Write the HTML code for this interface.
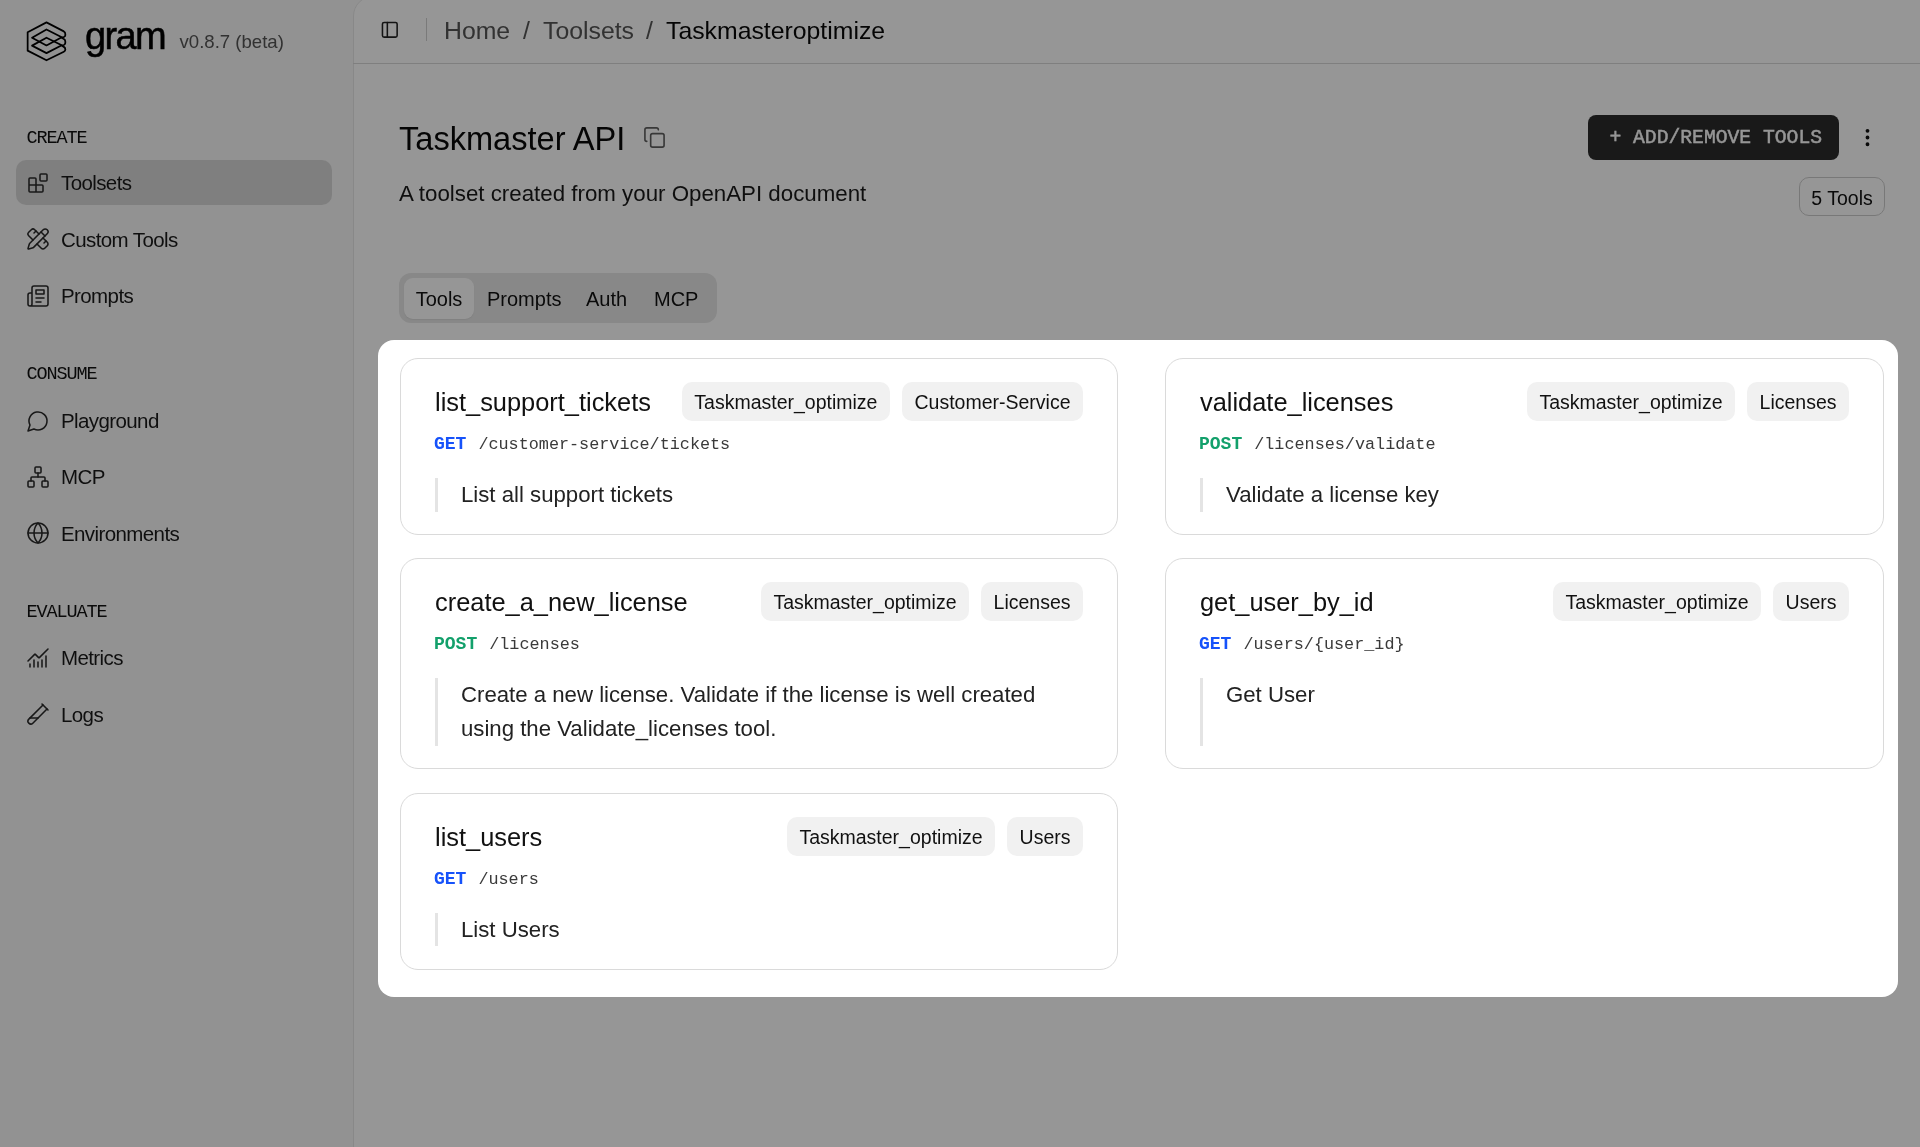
<!DOCTYPE html>
<html><head><meta charset="utf-8">
<style>
*{box-sizing:border-box;margin:0;padding:0}
html,body{width:1920px;height:1147px;overflow:hidden}
body{font-family:"Liberation Sans",sans-serif;background:#f8f8f8;color:#0a0a0a;position:relative}
.abs{position:absolute;white-space:nowrap}
.sb{position:absolute;left:0;top:0;width:353px;height:1147px;background:#f8f8f8}
.logo{position:absolute;left:22px;top:18px;width:50px;height:48px}
.brand{left:85px;top:10.5px;font-size:38px;letter-spacing:-1.6px;color:#000;line-height:50px;-webkit-text-stroke:0.5px #000}
.ver{left:179.5px;top:30px;font-size:18.6px;color:#555;line-height:24px}
.sec{left:26.5px;font-family:"Liberation Mono",monospace;font-size:18.5px;letter-spacing:-1.1px;color:#111;line-height:20px}
.item{position:absolute;left:16px;width:316px;height:45px;border-radius:10px}
.item.act{background:#d9d9d9}
.item svg{position:absolute;left:10.1px;top:10.5px;width:24px;height:24px}
.item span{position:absolute;left:45px;top:0;line-height:45px;font-size:20.5px;letter-spacing:-0.6px;color:#1a1a1a;white-space:nowrap}
.main{position:absolute;left:353px;top:-4px;width:1600px;height:1170px;background:#fff;border:1px solid #e8e8e8;border-radius:20px}
.hdr{position:absolute;left:353px;top:63px;width:1567px;height:1px;background:#d8d8d8}
.crumb{top:16px;font-size:24.8px;line-height:30px;color:#555}
.title{left:399px;top:119.5px;font-size:32.6px;line-height:38px;color:#0a0a0a}
.sub{left:399px;top:180px;font-size:22.3px;line-height:28px;color:#1a1a1a}
.tabs{position:absolute;left:399px;top:273px;width:318px;height:50px;border-radius:12px;background:#e8e8e8}
.tab{position:absolute;top:5px;height:41px;line-height:42px;font-size:20px;color:#111}
.tab.act{background:#fff;border-radius:9px;box-shadow:0 1px 2px rgba(0,0,0,.08)}
.btn{position:absolute;left:1588px;top:115px;width:251px;height:45px;border-radius:8px;background:#2c2c2c}
.btn span{position:absolute;left:21.4px;top:0;white-space:pre;font-family:"Liberation Mono",monospace;font-size:19.7px;color:#fff;line-height:47.5px;-webkit-text-stroke:0.45px #fff}
.count{position:absolute;left:1799px;top:177px;width:86px;height:39px;border:1px solid #cdcdcd;border-radius:10px;text-align:center;line-height:40px;font-size:19.5px;color:#111}
.spot{position:absolute;left:377.6px;top:339.8px;width:1520.4px;height:657.2px;border-radius:16px;background:#fff;box-shadow:0 0 0 4000px rgba(0,0,0,.41)}
.card{position:absolute;border:1px solid #dadada;border-radius:18px;background:#fff}
.card .t{position:absolute;left:34px;top:24px;line-height:39px;font-size:25.4px;color:#111;white-space:nowrap}
.badges{position:absolute;right:34px;top:23px;height:39px;display:flex;gap:12px}
.bd{height:39px;line-height:40.5px;padding:0 12.5px;border-radius:10px;background:#f1f1f1;font-size:19.5px;color:#111;white-space:nowrap}
.card .m{position:absolute;left:33px;top:73px;line-height:24px;font-family:"Liberation Mono",monospace;font-size:16.8px;color:#3a3a3a;white-space:nowrap}
.m b{font-weight:bold;font-size:18px}.m i{font-style:normal;margin-left:12px}
.get{color:#1652fa}.post{color:#13a06b}
.card .q{position:absolute;left:34px;top:119px;right:35px;bottom:22.5px;border-left:3px solid #e4e4e4;padding-left:23px;font-size:22.2px;line-height:33.7px;color:#222}
</style></head>
<body>
<div id="root" style="position:absolute;left:0;top:0;width:1920px;height:1147px;will-change:transform">
<div class="sb">
  <svg class="logo" viewBox="0 0 1195 1147" fill="none" stroke="#000" stroke-width="42" stroke-linejoin="round">
    <path d="M585 105 L1000 320 Q1035 340 1035 380 L1035 410 Q1035 440 1000 455 L950 470 L1000 500 Q1035 520 1035 560 L1035 600 Q1035 630 1000 645 L950 660 L1000 690 Q1035 710 1035 745 L1035 760 Q1035 790 1000 805 L585 1010 L135 780 L135 340 Z"/>
    <path d="M240 470 L585 275 L950 460 L585 655 Z"/>
    <path d="M240 660 L585 470 L950 650 L585 840 Z"/>
  </svg>
  <div class="abs brand">gram</div>
  <div class="abs ver">v0.8.7 (beta)</div>

  <div class="abs sec" style="top:128.5px">CREATE</div>
  <div class="item act" style="top:160px">
    <svg viewBox="0 0 24 24" fill="none" stroke="#2a2a2a" stroke-width="1.55" stroke-linecap="round" stroke-linejoin="round"><rect width="7" height="7" x="14" y="3" rx="1"/><path d="M10 21V8a1 1 0 0 0-1-1H4a1 1 0 0 0-1 1v12a1 1 0 0 0 1 1h12a1 1 0 0 0 1-1v-5a1 1 0 0 0-1-1H3"/></svg>
    <span>Toolsets</span></div>
  <div class="item" style="top:216.5px">
    <svg viewBox="0 0 24 24" fill="none" stroke="#2a2a2a" stroke-width="1.55" stroke-linecap="round" stroke-linejoin="round"><path d="M13 7 8.7 2.7a2.41 2.41 0 0 0-3.4 0L2.7 5.3a2.41 2.41 0 0 0 0 3.4L7 13"/><path d="m8 6 2-2"/><path d="m18 16 2-2"/><path d="m17 11 4.3 4.3c.94.94.94 2.46 0 3.4l-2.6 2.6c-.94.94-2.460.94-3.4 0L11 17"/><path d="M21.174 6.812a1 1 0 0 0-3.986-3.987L3.842 16.174a2 2 0 0 0-.5.83l-1.321 4.352a.5.5 0 0 0 .623.622l4.353-1.32a2 2 0 0 0 .83-.497z"/><path d="m15 5 4 4"/></svg>
    <span>Custom Tools</span></div>
  <div class="item" style="top:273px">
    <svg viewBox="0 0 24 24" fill="none" stroke="#2a2a2a" stroke-width="1.55" stroke-linecap="round" stroke-linejoin="round"><path d="M4 22h16a2 2 0 0 0 2-2V4a2 2 0 0 0-2-2H8a2 2 0 0 0-2 2v16a2 2 0 0 1-2 2Zm0 0a2 2 0 0 1-2-2v-9c0-1.1.9-2 2-2h2"/><path d="M18 14h-8"/><path d="M15 18h-5"/><path d="M10 6h8v4h-8V6Z"/></svg>
    <span>Prompts</span></div>

  <div class="abs sec" style="top:365px">CONSUME</div>
  <div class="item" style="top:398px">
    <svg viewBox="0 0 24 24" fill="none" stroke="#2a2a2a" stroke-width="1.55" stroke-linecap="round" stroke-linejoin="round"><path d="M7.9 20A9 9 0 1 0 4 16.1L2 22Z"/></svg>
    <span>Playground</span></div>
  <div class="item" style="top:454px">
    <svg viewBox="0 0 24 24" fill="none" stroke="#2a2a2a" stroke-width="1.55" stroke-linecap="round" stroke-linejoin="round"><rect x="16" y="16" width="6" height="6" rx="1"/><rect x="2" y="16" width="6" height="6" rx="1"/><rect x="9" y="2" width="6" height="6" rx="1"/><path d="M5 16v-3a1 1 0 0 1 1-1h12a1 1 0 0 1 1 1v3"/><path d="M12 12V8"/></svg>
    <span>MCP</span></div>
  <div class="item" style="top:510.5px">
    <svg viewBox="0 0 24 24" fill="none" stroke="#2a2a2a" stroke-width="1.55" stroke-linecap="round" stroke-linejoin="round"><circle cx="12" cy="12" r="10"/><path d="M12 2a14.5 14.5 0 0 0 0 20 14.5 14.5 0 0 0 0-20"/><path d="M2 12h20"/></svg>
    <span>Environments</span></div>

  <div class="abs sec" style="top:602.5px">EVALUATE</div>
  <div class="item" style="top:635px">
    <svg viewBox="0 0 24 24" fill="none" stroke="#2a2a2a" stroke-width="1.55" stroke-linecap="round" stroke-linejoin="round"><path d="M12 16v5"/><path d="M16 14v7"/><path d="M20 10v11"/><path d="m22 3-8.646 8.646a.5.5 0 0 1-.708 0L9.354 8.354a.5.5 0 0 0-.707 0L2 15"/><path d="M4 18v3"/><path d="M8 14v7"/></svg>
    <span>Metrics</span></div>
  <div class="item" style="top:691.5px">
    <svg viewBox="0 0 24 24" fill="none" stroke="#2a2a2a" stroke-width="1.55" stroke-linecap="round" stroke-linejoin="round"><path d="M21 7 6.82 21.18a2.83 2.83 0 0 1-3.99-.01a2.83 2.83 0 0 1 0-4L17 3"/><path d="m16 2 6 6"/><path d="M12 16H4"/></svg>
    <span>Logs</span></div>
</div>

<div class="main"></div>
<div class="hdr"></div>
<svg class="abs" style="left:380.1px;top:19.6px;width:19.6px;height:19.6px" viewBox="0 0 24 24" fill="none" stroke="#222" stroke-width="1.9" stroke-linecap="round" stroke-linejoin="round"><rect width="18" height="18" x="3" y="3" rx="2"/><path d="M9 3v18"/></svg>
<div class="abs" style="left:425.5px;top:18px;width:1px;height:23px;background:#cfcfcf"></div>
<div class="abs crumb" style="left:444px">Home</div>
<div class="abs crumb" style="left:523px">/</div>
<div class="abs crumb" style="left:543px">Toolsets</div>
<div class="abs crumb" style="left:646px">/</div>
<div class="abs crumb" style="left:666px;color:#0a0a0a">Taskmasteroptimize</div>

<div class="abs title">Taskmaster API</div>
<svg class="abs" style="left:643px;top:126px;width:23px;height:23px" viewBox="0 0 24 24" fill="none" stroke="#606060" stroke-width="1.7" stroke-linecap="round" stroke-linejoin="round"><rect width="14" height="14" x="8" y="8" rx="2" ry="2"/><path d="M4 16c-1.1 0-2-.9-2-2V4c0-1.1.9-2 2-2h10c1.1 0 2 .9 2 2"/></svg>
<div class="abs sub">A toolset created from your OpenAPI document</div>

<div class="btn"><span>+ ADD/REMOVE TOOLS</span></div>
<svg class="abs" style="left:1856.2px;top:126.3px;width:23px;height:23px" viewBox="0 0 24 24" fill="#111" stroke="#111" stroke-width="2"><circle cx="12" cy="12" r="1"/><circle cx="12" cy="5" r="1"/><circle cx="12" cy="19" r="1"/></svg>
<div class="count">5 Tools</div>

<div class="tabs">
  <div class="tab act" style="left:5px;width:70px;text-align:center">Tools</div>
  <div class="tab" style="left:88px">Prompts</div>
  <div class="tab" style="left:187px">Auth</div>
  <div class="tab" style="left:255px">MCP</div>
</div>

<div class="spot"></div>

<div class="card" style="left:400px;top:358px;width:718px;height:177px">
  <div class="t">list_support_tickets</div>
  <div class="badges"><div class="bd">Taskmaster_optimize</div><div class="bd">Customer-Service</div></div>
  <div class="m"><b class="get">GET</b><i>/customer-service/tickets</i></div>
  <div class="q">List all support tickets</div>
</div>
<div class="card" style="left:1165px;top:358px;width:719px;height:177px">
  <div class="t">validate_licenses</div>
  <div class="badges"><div class="bd">Taskmaster_optimize</div><div class="bd">Licenses</div></div>
  <div class="m"><b class="post">POST</b><i>/licenses/validate</i></div>
  <div class="q">Validate a license key</div>
</div>
<div class="card" style="left:400px;top:558px;width:718px;height:211px">
  <div class="t">create_a_new_license</div>
  <div class="badges"><div class="bd">Taskmaster_optimize</div><div class="bd">Licenses</div></div>
  <div class="m"><b class="post">POST</b><i>/licenses</i></div>
  <div class="q">Create a new license. Validate if the license is well created using the Validate_licenses tool.</div>
</div>
<div class="card" style="left:1165px;top:558px;width:719px;height:211px">
  <div class="t">get_user_by_id</div>
  <div class="badges"><div class="bd">Taskmaster_optimize</div><div class="bd">Users</div></div>
  <div class="m"><b class="get">GET</b><i>/users/{user_id}</i></div>
  <div class="q">Get User</div>
</div>
<div class="card" style="left:400px;top:792.5px;width:718px;height:177px">
  <div class="t">list_users</div>
  <div class="badges"><div class="bd">Taskmaster_optimize</div><div class="bd">Users</div></div>
  <div class="m"><b class="get">GET</b><i>/users</i></div>
  <div class="q">List Users</div>
</div>
</div>
</body></html>
